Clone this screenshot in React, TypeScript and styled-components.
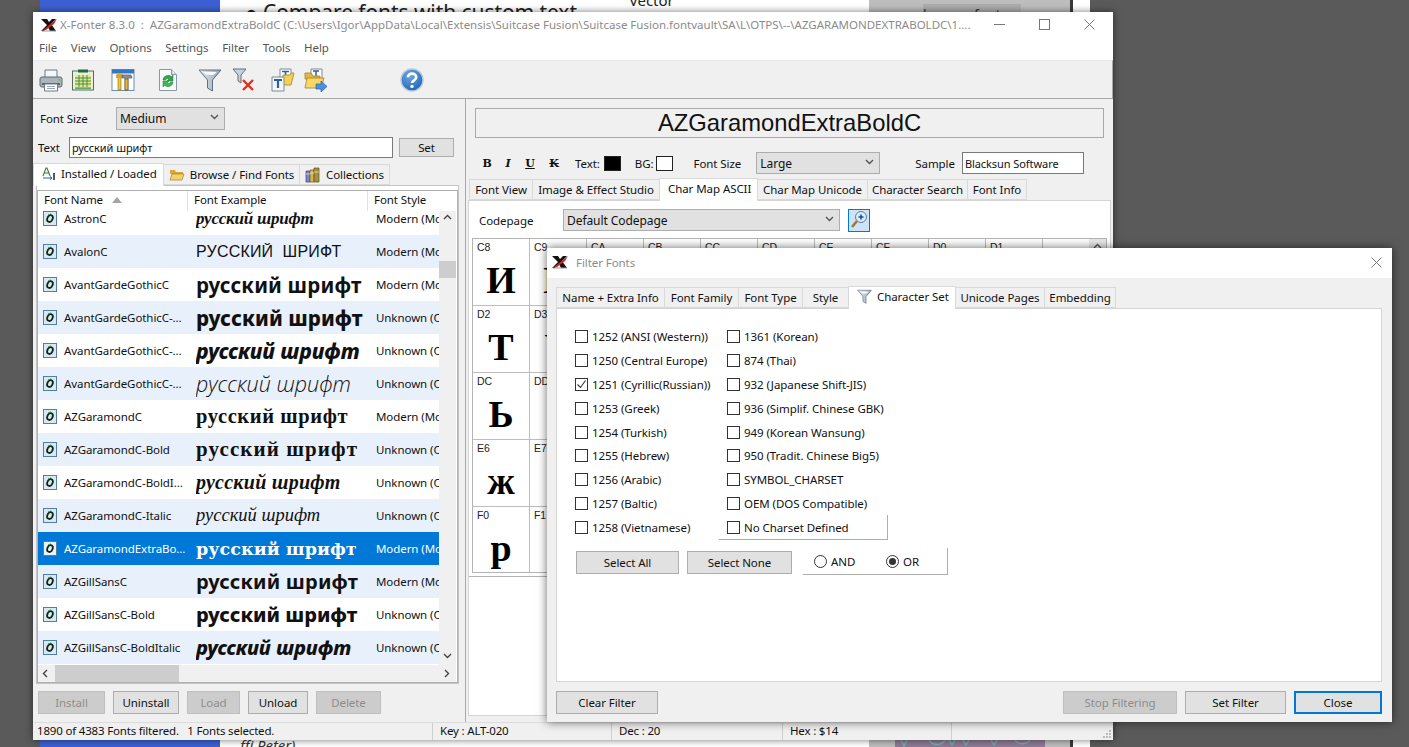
import React from "react";
import styled, { createGlobalStyle } from "styled-components";

const UI = `"Noto Sans", "Open Sans", sans-serif`;

const Global = createGlobalStyle`
  html, body { margin: 0; padding: 0; background: #5a5a5a; overflow: hidden; }
  * { box-sizing: border-box; }
`;

const Desktop = styled.div`
  position: relative; width: 1409px; height: 747px; overflow: hidden; background: #5a5a5a;
  font-family: ${UI}; font-size: 11.5px; letter-spacing: -0.07px; color: #111;
`;

/* ---------- page behind the windows ---------- */
const BackPage = styled.div`
  position: absolute; left: 40px; top: 0; width: 1050px; height: 747px; display: flex; background: #fff;
`;
const BackBlue = styled.div`width: 180px; background: #3c60d2;`;
const BackContent = styled.div`
  width: 649px; display: flex; flex-direction: column; justify-content: space-between; overflow: hidden;
`;
const BackTop = styled.div`display: flex; align-items: flex-start;`;
const BackBullet = styled.div`
  margin: 0 0 0 25px; font-size: 21px; line-height: 24px; white-space: nowrap; color: #222;
`;
const BackVector = styled.div`
  margin: -10px 0 0 52px; font-size: 15px; line-height: 20px; color: #222;
`;
const BackSign = styled.div`
  margin: 0 0 -4px 20px; height: 12px; font-size: 15px; line-height: 12px; font-style: italic; color: #333;
`;
const BackGray = styled.div`
  width: 201px; background: #bdbdbd; display: flex; flex-direction: column; justify-content: space-between;
`;
const BackBrowse = styled.div`
  margin: 4px 49px 0 54px; height: 8px; background: #adadad; font-size: 14px; line-height: 22px; overflow: hidden; color: #333;
`;
const BackArt = styled.div`
  margin: 0 25px 0 26px; height: 7px; background: #8d7a96; overflow: hidden;
`;
const BackEdge = styled.div`width: 3px; background: #3a3a3a;`;

/* ---------- window shell ---------- */
const MainWindow = styled.div`
  position: absolute; left: 33px; top: 12px; width: 1080px; height: 728px; background: #f0f0f0;
  display: flex; flex-direction: column; box-shadow: 0 0 7px rgba(0,0,0,.55);
`;
const TitleBar = styled.div`
  height: 25px; background: #fff; display: flex; align-items: center; padding-left: 7px; color: #8b8b8b; flex: none;
`;
const TitleText = styled.div`margin-left: 2px; white-space: pre; width: 915px; overflow: hidden; letter-spacing: 0;`;
const WinControls = styled.div`display: flex; align-items: center; margin-left: 19px; gap: 34px;`;
const MenuBar = styled.div`
  height: 23px; background: #fff; display: flex; align-items: center; padding: 0 0 3px 6px; gap: 13.7px; color: #555; flex: none;
`;
const Toolbar = styled.div`
  height: 39px; background: #f0f0f0; border-top: 1px solid #e8e8e8; border-bottom: 1px solid #a8a8a8; border-right: 1px solid #a8a8a8; display: flex; align-items: center; padding-left: 6px; flex: none;
`;
const ToolSlot = styled.div<{ $ml: number }>`width: 24px; height: 24px; margin-left: ${p => p.$ml}px; flex: none;`;
const Body = styled.div`flex: 1; display: flex; min-height: 0;`;
const StatusBar = styled.div`
  height: 18px; flex: none; display: flex; background: #f0f0f0; border-top: 1px solid #dcdcdc; position: relative;
`;
const StatusCell = styled.div<{ $w: number; $line?: boolean }>`
  width: ${p => p.$w}px; flex: none; padding-left: ${p => (p.$line ? 7 : 4)}px; line-height: 16px; white-space: pre; letter-spacing: -0.18px; border-left: ${p => (p.$line ? "1px solid #cfcfcf" : "none")};
`;
const Grip = styled.div`position: absolute; right: 1px; bottom: 1px; width: 10px; height: 10px;`;

/* ---------- left pane ---------- */
const LeftPane = styled.div`
  width: 433px; flex: none; display: flex; flex-direction: column; border-right: 1px solid #a9a9a9;
`;
const SizeRow = styled.div`display: flex; align-items: center; margin: 8px 0 0 7px; height: 23px;`;
const RowLabel = styled.div<{ $w: number }>`width: ${p => p.$w}px; flex: none; white-space: nowrap;`;
const SelectBox = styled.div<{ $w: number; $h?: number; $ml?: number }>`
  width: ${p => p.$w}px; height: ${p => p.$h ?? 23}px; margin-left: ${p => p.$ml ?? 0}px; flex: none; background: #e1e1e1; border: 1px solid #adadad; display: flex; align-items: center; justify-content: space-between; padding: 0 5px 0 3px; font-size: 12px;
`;
const TextRow = styled.div`display: flex; align-items: center; margin: 7px 0 0 5px; height: 21px;`;
const TextField = styled.div<{ $w: number; $h: number; $ml?: number }>`
  width: ${p => p.$w}px; height: ${p => p.$h}px; margin-left: ${p => p.$ml ?? 0}px; flex: none; background: #fff; border: 1px solid #7a7a7a; padding-left: 2px; display: flex; align-items: center; font-size: 11px; white-space: nowrap; overflow: hidden;
`;
const Btn = styled.div<{ $w: number; $h?: number; $off?: boolean; $focus?: boolean; $ml?: number }>`
  width: ${p => p.$w}px; height: ${p => p.$h ?? 23}px; margin-left: ${p => p.$ml ?? 0}px; flex: none; display: flex; align-items: center; justify-content: center; white-space: nowrap;
  background: ${p => (p.$off ? "#cccccc" : "#e1e1e1")};
  color: ${p => (p.$off ? "#8c8c8c" : "#111")};
  border: ${p => (p.$focus ? "2px solid #0078d7" : p.$off ? "1px solid #bfbfbf" : "1px solid #adadad")};
`;
const TabRow = styled.div<{ $ml: number; $mt: number }>`
  display: flex; align-items: flex-end; margin: ${p => p.$mt}px 0 0 ${p => p.$ml}px; height: 22px; flex: none; position: relative; z-index: 1;
`;
const Tab = styled.div<{ $w: number; $active?: boolean }>`
  width: ${p => p.$w}px; flex: none; display: flex; align-items: center; justify-content: ${p => (p.$active ? "flex-start" : "center")}; gap: 5px; white-space: nowrap;
  height: ${p => (p.$active ? 23 : 21)}px;
  background: ${p => (p.$active ? "#fff" : "#f0f0f0")};
  border: 1px solid #d9d9d9; border-bottom: ${p => (p.$active ? "none" : "1px solid #d9d9d9")};
  margin-bottom: ${p => (p.$active ? -1 : 0)}px; margin-right: -1px;
  padding-left: ${p => (p.$active ? 8 : 0)}px;
  padding-bottom: ${p => (p.$active ? 3 : 0)}px;
`;
const TabsPanel = styled.div`
  margin-left: 3px; width: 423px; height: 499px; border: 1px solid #c4c4c4; background: #fff; padding-top: 4px; flex: none;
`;
const FontList = styled.div`
  width: 421px; height: 493px; border: 1px solid #b0b0b0; background: #fff; display: flex; flex-direction: column; overflow: hidden;
`;
const ListHeader = styled.div`height: 20px; flex: none; display: flex; align-items: center; background: #fff;`;
const HeaderCell = styled.div<{ $w: number; $line?: boolean }>`
  width: ${p => p.$w}px; flex: none; height: 20px; display: flex; align-items: center; gap: 9px; padding: 0 0 3px 6px; border-right: ${p => (p.$line ? "1px solid #e2e2e2" : "none")};
`;
const ListMiddle = styled.div`flex: 1; display: flex; min-height: 0;`;
const Rows = styled.div`width: 401px; flex: none; overflow: hidden;`;
const RowsInner = styled.div`margin-top: -9px;`;
const FontRow = styled.div<{ $alt: boolean; $sel: boolean }>`
  height: 33px; display: flex; align-items: center; overflow: hidden;
  background: ${p => (p.$sel ? "#0078d7" : p.$alt ? "#e8f0fb" : "#fff")};
  color: ${p => (p.$sel ? "#fff" : "#111")};
`;
const NameCell = styled.div`width: 158px; flex: none; display: flex; align-items: center; padding-left: 5px; gap: 7px; white-space: nowrap; overflow: hidden;`;
const SampleCell = styled.div<{ $ff: string; $fw: number; $it?: boolean; $fs: number; $ls: number; $up?: boolean }>`
  width: 180px; flex: none; white-space: pre; overflow: hidden;
  font-family: ${p => p.$ff}; font-weight: ${p => p.$fw}; font-style: ${p => (p.$it ? "italic" : "normal")};
  font-size: ${p => p.$fs}px; letter-spacing: ${p => p.$ls}px; text-transform: ${p => (p.$up ? "uppercase" : "none")};
`;
const StyleCell = styled.div`width: 63px; flex: none; white-space: nowrap; overflow: hidden;`;
const VScroll = styled.div`
  width: 17px; flex: none; background: #f0f0f0; display: flex; flex-direction: column; justify-content: space-between; align-items: center; position: relative; padding: 3px 0;
`;
const VThumb = styled.div`position: absolute; left: 0; top: 50px; width: 17px; height: 17px; background: #cdcdcd;`;
const HScroll = styled.div`
  height: 17px; flex: none; width: 418px; background: #f0f0f0; display: flex; align-items: center; justify-content: space-between; position: relative; padding: 0 4px;
`;
const HThumb = styled.div`position: absolute; left: 17px; top: 0; width: 124px; height: 17px; background: #cdcdcd;`;
const ActionRow = styled.div`display: flex; gap: 8px; margin: 7px 0 0 5px;`;

/* ---------- right pane ---------- */
const RightPane = styled.div`flex: 1; display: flex; flex-direction: column; padding-left: 1px; min-width: 0;`;
const NameBanner = styled.div`
  margin: 9px 0 0 8px; width: 629px; height: 30px; flex: none; border: 1px solid #a9a9a9; display: flex; align-items: center; justify-content: center;
  font-family: "Liberation Sans", Arial, sans-serif; font-size: 23.8px; letter-spacing: 0; color: #111;
`;
const FormatRow = styled.div`display: flex; align-items: center; height: 22px; margin-top: 14px; flex: none; padding-left: 14px;`;
const FormatGlyph = styled.div<{ $ml: number; $it?: boolean; $u?: boolean; $s?: boolean }>`
  font-family: "DejaVu Serif", serif; font-weight: 700; font-size: 11px; width: 12px; text-align: center; margin-left: ${p => p.$ml}px; color: #111;
  font-style: ${p => (p.$it ? "italic" : "normal")};
  text-decoration: ${p => (p.$u ? "underline" : p.$s ? "line-through" : "none")};
`;
const FormatLabel = styled.div<{ $ml: number }>`margin-left: ${p => p.$ml}px; white-space: nowrap;`;
const Swatch = styled.div<{ $c: string; $ml: number }>`
  width: 17px; height: 15px; margin-left: ${p => p.$ml}px; background: ${p => p.$c}; border: 1px solid #222; flex: none;
`;
const RightPanel = styled.div`
  margin-left: 1px; width: 643px; height: 516px; flex: none; background: #fff; border: 1px solid #d4d4d4; display: flex; flex-direction: column;
`;
const CodeRow = styled.div`display: flex; align-items: center; margin: 7px 0 0 10px; height: 24px; flex: none;`;
const ZoomBtn = styled.div`
  width: 22px; height: 23px; margin-left: 8px; background: #cce4f7; border: 1px solid #0078d7; flex: none; display: flex; align-items: center; justify-content: center;
`;
const CharGridWrap = styled.div`
  margin: 6px 0 0 3px; width: 635px; height: 335px; flex: none; border: 1px solid #b4b4b4; display: flex;
`;
const CharGrid = styled.div`
  flex: 1; display: grid; grid-template-columns: repeat(10, 57px) 47px; grid-auto-rows: 67px; overflow: hidden; font-family: "Liberation Sans", sans-serif;
`;
const CharCell = styled.div`
  border-right: 1px solid #bdbdbd; border-bottom: 1px solid #bdbdbd; display: flex; flex-direction: column; align-items: center; position: relative; padding-top: 19px;
`;
const CharCode = styled.div`position: absolute; left: 4px; top: 2px; font-size: 10.5px; color: #222;`;
const CharGlyph = styled.div`font-family: "Liberation Serif", serif; font-weight: 700; font-size: 38px; line-height: 44px; color: #000;`;
const GridScroll = styled.div`
  width: 17px; flex: none; background: #e8e8e8; display: flex; justify-content: center; padding-top: 4px;
`;
const GridFootLine = styled.div`margin: 3px 0 0 0; height: 1px; background: #b4b4b4; flex: none;`;

/* ---------- dialog ---------- */
const Dialog = styled.div`
  position: absolute; left: 547px; top: 248px; width: 845px; height: 474px; background: #f0f0f0; display: flex; flex-direction: column; box-shadow: 0 0 9px rgba(0,0,0,.6); z-index: 5;
`;
const DialogTitle = styled.div`
  height: 30px; flex: none; background: #fff; display: flex; align-items: center; padding: 0 10px 2px 4px; gap: 7px; color: #8b8b8b;
`;
const DialogName = styled.div`flex: 1;`;
const DialogPanel = styled.div`
  margin-left: 9px; width: 826px; height: 374px; flex: none; background: #fff; border: 1px solid #d4d4d4; padding: 16px 0 0 18px;
`;
const CheckColumns = styled.div`display: flex;`;
const CheckCol = styled.div<{ $w: number }>`width: ${p => p.$w}px; flex: none; display: flex; flex-direction: column;`;
const CheckRow = styled.div<{ $group?: boolean }>`
  height: ${p => (p.$group ? 25 : 23.8)}px; display: flex; align-items: center; gap: 4px; padding-left: 8px; white-space: nowrap;
  border-right: ${p => (p.$group ? "1px solid #adadad" : "none")};
  border-bottom: ${p => (p.$group ? "1px solid #adadad" : "none")};
`;
const PlainCheckRow = styled(CheckRow)`padding-left: 0;`;
const Box = styled.div`
  width: 13px; height: 13px; flex: none; border: 1px solid #333; background: #fff; display: flex; align-items: center; justify-content: center;
`;
const BulkRow = styled.div`display: flex; align-items: flex-end; margin: 8px 0 0 1px; height: 27px;`;
const RadioGroup = styled.div`
  margin: 0 0 0 11px; width: 145px; height: 27px; border-right: 1px solid #adadad; border-bottom: 1px solid #adadad; display: flex; align-items: center; padding-left: 11px;
`;
const RadioItem = styled.div<{ $w: number }>`width: ${p => p.$w}px; display: flex; align-items: center; gap: 4px;`;
const Radio = styled.div<{ $on?: boolean }>`
  width: 13px; height: 13px; border: 1px solid #333; border-radius: 50%; background: #fff; flex: none; display: flex; align-items: center; justify-content: center;
  &::after { content: ""; width: 7px; height: 7px; border-radius: 50%; background: ${p => (p.$on ? "#333" : "transparent")}; }
`;
const BulkBtnGap = styled.div`display: flex; gap: 8px; margin-bottom: 1px;`;
const DialogFooter = styled.div`
  display: flex; align-items: center; gap: 8px; padding: 9px 10px 0 9px;
`;
const FooterSpacer = styled.div`flex: 1;`;

/* ---------- icons ---------- */
const Glyph = styled.svg`display: block; flex: none;`;

const Logo = () => (
  <Glyph width="18" height="14" viewBox="0 0 18 14">
    <path d="M1 1h6l2 3 3-3h4l-5 5 5 7h-6l-2-4-4 4H1l6-6z" fill="#111" />
    <path d="M3 12L17 1l-3 5-8 6z" fill="#d42020" />
    <path d="M2 13h14" stroke="#999" strokeWidth="1" />
  </Glyph>
);
const Chevron = ({ dir = "down", c = "#555" }: { dir?: "down" | "up" | "left" | "right"; c?: string }) => {
  const d = { down: "M1 1l3.5 3.5L8 1", up: "M1 5l3.5-3.5L8 5", left: "M5 1L1.5 4.5 5 8", right: "M2 1l3.5 3.5L2 8" }[dir];
  return (
    <Glyph width="9" height="9" viewBox="0 0 9 9">
      <path d={d} fill="none" stroke={c} strokeWidth="1.4" />
    </Glyph>
  );
};
const IconMin = () => <Glyph width="11" height="11" viewBox="0 0 11 11"><path d="M0 5.5h11" stroke="#777" /></Glyph>;
const IconMax = () => <Glyph width="11" height="11" viewBox="0 0 11 11"><rect x=".5" y=".5" width="10" height="10" fill="none" stroke="#777" /></Glyph>;
const IconClose = () => <Glyph width="11" height="11" viewBox="0 0 11 11"><path d="M.5.5l10 10M10.5.5l-10 10" stroke="#777" /></Glyph>;

const Printer = () => (
  <Glyph width="24" height="24" viewBox="0 0 24 24">
    <path d="M6 2h12v8H6z" fill="#f4f6f8" stroke="#6d7a86" />
    <rect x="1" y="9" width="22" height="10" rx="2" fill="#a9b4bd" stroke="#5c6873" />
    <rect x="3" y="15" width="18" height="2" fill="#59636d" />
    <circle cx="20" cy="12" r="1" fill="#62c04a" />
    <path d="M5.5 16h13v7h-13z" fill="#fff" stroke="#6d7a86" />
    <path d="M8 18.5h8M8 20.5h8" stroke="#9aa6b1" />
  </Glyph>
);
const Sheet = () => (
  <Glyph width="24" height="24" viewBox="0 0 24 24">
    <rect x="1.5" y="3" width="21" height="19" fill="#e9efd8" stroke="#55705a" />
    <rect x="7" y="1.5" width="10" height="3" fill="#1f6b3a" />
    <rect x="4" y="7" width="16" height="12" fill="#f1e38a" />
    <path d="M4 10h16M4 13h16M4 16h16M8 7v12M12 7v12M16 7v12" stroke="#2e8b4a" strokeWidth=".9" />
    <rect x="4" y="19.5" width="16" height="1.2" fill="#2e8b4a" />
  </Glyph>
);
const Hammer = () => (
  <Glyph width="24" height="24" viewBox="0 0 24 24">
    <rect x="1" y="1.5" width="22" height="21" fill="#fff" stroke="#6f8eb4" />
    <rect x="1" y="1.5" width="22" height="4" fill="#2f78c8" />
    <path d="M7 9h3v13H7z" fill="#f0c93a" stroke="#97761b" strokeWidth=".7" />
    <path d="M5 7c2-2 5-2 7 0v3H5z" fill="#d9a625" />
    <path d="M11 7h9l1 3h-4v12h-3V10h-3z" fill="#8e8f96" stroke="#55565b" strokeWidth=".7" />
    <path d="M14 11h3v11h-3z" fill="#e6b530" stroke="#7a5d14" strokeWidth=".7" />
  </Glyph>
);
const RefreshDoc = () => (
  <Glyph width="24" height="24" viewBox="0 0 24 24">
    <path d="M3.5 1.5h12l5 5v16h-17z" fill="#fafbfc" stroke="#8b97a3" />
    <path d="M15.5 1.5v5h5" fill="#dde3e8" stroke="#8b97a3" />
    <path d="M7 12a5 5 0 0 1 8.5-3.2L17 7v6h-6l2-2a2.6 2.6 0 0 0-3.6 1z" fill="#2ea84a" stroke="#1b7a32" strokeWidth=".5" />
    <path d="M17 14a5 5 0 0 1-8.5 3.2L7 19v-6h6l-2 2a2.6 2.6 0 0 0 3.6-1z" fill="#3fb95a" stroke="#1b7a32" strokeWidth=".5" />
  </Glyph>
);
const Funnel = ({ size = 24 }: { size?: number }) => (
  <Glyph width={size} height={size} viewBox="0 0 24 24">
    <defs>
      <linearGradient id="fg" x1="0" x2="1" y1="0" y2="0">
        <stop offset="0" stopColor="#e9eef2" /><stop offset="1" stopColor="#8fa1b0" />
      </linearGradient>
    </defs>
    <path d="M1 2h22l-8.5 10v11l-5-3v-8z" fill="url(#fg)" stroke="#5f7180" strokeWidth="1" />
    <path d="M5 4h14l-4 3H9z" fill="#f9fbfc" />
  </Glyph>
);
const FunnelX = () => (
  <Glyph width="24" height="24" viewBox="0 0 24 24">
    <path d="M1 1h13l-5 6v8l-3-2V7z" fill="#c8d2da" stroke="#5f7180" />
    <path d="M11 12l10 10M21 12L11 22" stroke="#e0301e" strokeWidth="2.4" />
  </Glyph>
);
const FolderT = () => (
  <Glyph width="24" height="24" viewBox="0 0 24 24">
    <path d="M9 1h11v12H9z" fill="#fff" stroke="#7c8b99" />
    <path d="M11 3.5h7M14.5 3.5v6" stroke="#2d5fa8" strokeWidth="1.6" />
    <path d="M12 7h7l1-2h3l-3 12H11z" fill="#f6cf55" stroke="#a3802a" strokeWidth=".8" />
    <path d="M1 9h12v14H1z" fill="#f4f7fa" stroke="#7c8b99" />
    <path d="M3 12h8M7 12v8" stroke="#2d5fa8" strokeWidth="2.2" />
  </Glyph>
);
const FolderArrow = () => (
  <Glyph width="24" height="24" viewBox="0 0 24 24">
    <path d="M7 1h11v10H7z" fill="#fff" stroke="#7c8b99" />
    <path d="M9 3h6M12 3v6" stroke="#2d5fa8" strokeWidth="1.5" />
    <path d="M1 5h6l2 3h7v3H1z" fill="#e3b63f" stroke="#a3802a" strokeWidth=".8" />
    <path d="M1 20L3 10h17l-3 10z" fill="#f8d766" stroke="#a3802a" strokeWidth=".8" />
    <path d="M12 16h5v-3l6 5.5-6 5.5v-3h-5z" fill="#4c8fe0" stroke="#2a62a8" strokeWidth=".7" />
  </Glyph>
);
const Help = () => (
  <Glyph width="24" height="24" viewBox="0 0 24 24">
    <defs>
      <radialGradient id="hg" cx=".4" cy=".3" r=".8">
        <stop offset="0" stopColor="#6da9e8" /><stop offset="1" stopColor="#1c5cac" />
      </radialGradient>
    </defs>
    <circle cx="12" cy="12" r="11" fill="url(#hg)" stroke="#b7c8dc" strokeWidth="1.4" />
    <path d="M8 9.3c0-5 8.2-5 8.2 0 0 3.2-4.1 2.8-4.1 5.7" fill="none" stroke="#fff" strokeWidth="2.7" />
    <circle cx="12" cy="18.4" r="1.7" fill="#fff" />
  </Glyph>
);
const FontFile = ({ sel }: { sel: boolean }) => (
  <Glyph width="14" height="15" viewBox="0 0 14 15">
    <rect x=".5" y=".5" width="13" height="14" fill={sel ? "#eaf3fb" : "#dbe8f3"} stroke="#4f7fa8" />
    <ellipse cx="7" cy="7.5" rx="2.6" ry="3.6" transform="rotate(25 7 7.5)" fill="none" stroke="#0f2a14" strokeWidth="1.8" />
    <path d="M5 4l3-1.2" stroke="#3ba55d" strokeWidth="1" />
  </Glyph>
);
const SortUp = () => <Glyph width="10" height="6" viewBox="0 0 10 6"><path d="M5 0l5 6H0z" fill="#a5a5a5" /></Glyph>;
const IconInstalled = () => (
  <Glyph width="14" height="14" viewBox="0 0 14 14">
    <path d="M1 9L4 1h1l3 8M2.5 6h4" fill="none" stroke="#3a7a3a" strokeWidth="1.1" />
    <path d="M1 11h9l-2-1.5M10 11l-2 1.5" fill="none" stroke="#2a62a8" />
    <path d="M12 6v7" stroke="#223" strokeWidth="1.5" />
  </Glyph>
);
const IconFolder = () => (
  <Glyph width="16" height="13" viewBox="0 0 16 13">
    <path d="M1 2h5l1 2h7v2H1z" fill="#d9a93a" />
    <path d="M1 12l2-6h12l-2 6z" fill="#f6d36a" stroke="#a3802a" strokeWidth=".7" />
  </Glyph>
);
const IconBooks = () => (
  <Glyph width="16" height="16" viewBox="0 0 16 16">
    <path d="M1 4h4v11H1z" fill="#7d86c9" stroke="#3c4170" strokeWidth=".7" />
    <path d="M5 3h4v12H5z" fill="#d6b553" stroke="#6f5a1c" strokeWidth=".7" />
    <path d="M9 1h5v14H9z" fill="#a39040" stroke="#5d5218" strokeWidth=".7" />
    <path d="M1 7h4M5 6h4M9 5h5" stroke="#fff" strokeWidth=".6" />
  </Glyph>
);
const IconZoom = () => (
  <Glyph width="18" height="20" viewBox="0 0 18 20">
    <circle cx="11" cy="7" r="5.5" fill="#dbeaf7" stroke="#5d7fa3" />
    <path d="M8.5 7h5M11 4.5v5" stroke="#1c4f9c" strokeWidth="1.6" />
    <path d="M7 11l-5 6" stroke="#a8742a" strokeWidth="2.6" />
  </Glyph>
);
const CheckMark = () => (
  <Glyph width="11" height="11" viewBox="0 0 11 11"><path d="M1.5 5.5l3 3 5-7" fill="none" stroke="#333" strokeWidth="1.1" /></Glyph>
);
const GripDots = () => (
  <Glyph width="10" height="10" viewBox="0 0 10 10">
    <path d="M7 1h2v2H7zM4 4h2v2H4zM7 4h2v2H7zM1 7h2v2H1zM4 7h2v2H4zM7 7h2v2H7z" fill="#bbb" />
  </Glyph>
);
const ArtPattern = () => (
  <Glyph width="150" height="7" viewBox="0 0 150 7">
    <path d="M6 0l3 6 3-6M34 0c4 6 12 6 16 0M54 0l3 5 3-5M68 0l3 5 3-5M96 0l3 5 3-5M120 0c3 5 12 5 15 0" fill="none" stroke="#6fb4b0" strokeWidth="1.4" />
  </Glyph>
);

/* ---------- data ---------- */
const SANS = `"Noto Sans", "Open Sans", sans-serif`;
const OPEN = `"Open Sans", "Noto Sans", sans-serif`;
const SERIF = `"Liberation Serif", serif`;
const DJS = `"DejaVu Serif", serif`;

type F = { name: string; kind: string; ff: string; fw: number; fs: number; ls: number; it?: boolean; up?: boolean };
const fonts: F[] = [
  { name: "AstronC", kind: "Modern (Mo", ff: SERIF, fw: 700, fs: 17, ls: -0.2, it: true },
  { name: "AvalonC", kind: "Modern (Mo", ff: `"Liberation Sans", sans-serif`, fw: 400, fs: 16, ls: 0.2, up: true },
  { name: "AvantGardeGothicC", kind: "Modern (Mo", ff: SANS, fw: 700, fs: 20.5, ls: 0.15 },
  { name: "AvantGardeGothicC-...", kind: "Unknown (C", ff: SANS, fw: 800, fs: 20.5, ls: 0.1 },
  { name: "AvantGardeGothicC-...", kind: "Unknown (C", ff: SANS, fw: 800, fs: 21, ls: 0, it: true },
  { name: "AvantGardeGothicC-...", kind: "Unknown (C", ff: OPEN, fw: 300, fs: 21.5, ls: 0, it: true },
  { name: "AZGaramondC", kind: "Modern (Mo", ff: SERIF, fw: 700, fs: 20.5, ls: 0.6 },
  { name: "AZGaramondC-Bold", kind: "Unknown (C", ff: SERIF, fw: 700, fs: 21, ls: 1.1 },
  { name: "AZGaramondC-BoldI...", kind: "Unknown (C", ff: SERIF, fw: 700, fs: 20, ls: 0.25, it: true },
  { name: "AZGaramondC-Italic", kind: "Unknown (C", ff: SERIF, fw: 400, fs: 18.5, ls: 0, it: true },
  { name: "AZGaramondExtraBo...", kind: "Modern (Mo", ff: DJS, fw: 700, fs: 17.5, ls: 0.05 },
  { name: "AZGillSansC", kind: "Modern (Mo", ff: SANS, fw: 700, fs: 20, ls: 0.2 },
  { name: "AZGillSansC-Bold", kind: "Unknown (C", ff: SANS, fw: 800, fs: 20, ls: 0 },
  { name: "AZGillSansC-BoldItalic", kind: "Unknown (C", ff: SANS, fw: 800, fs: 20, ls: -0.05, it: true },
];
const SEL = 10;

const codes = Array.from({ length: 50 }, (_, i) => 0xc8 + i);
const hex = (n: number) => n.toString(16).toUpperCase();
const glyph = (n: number) => String.fromCharCode(0x410 + n - 0xc0);

const leftSets: [string, boolean?][] = [
  ["1252 (ANSI (Western))"], ["1250 (Central Europe)"], ["1251 (Cyrillic(Russian))", true], ["1253 (Greek)"], ["1254 (Turkish)"],
  ["1255 (Hebrew)"], ["1256 (Arabic)"], ["1257 (Baltic)"], ["1258 (Vietnamese)"],
];
const rightSets = [
  "1361 (Korean)", "874 (Thai)", "932 (Japanese Shift-JIS)", "936 (Simplif. Chinese GBK)", "949 (Korean Wansung)",
  "950 (Tradit. Chinese Big5)", "SYMBOL_CHARSET", "OEM (DOS Compatible)",
];
const tools: [number, React.ReactNode][] = [
  [0, <Printer />], [8, <Sheet />], [16, <Hammer />], [21, <RefreshDoc />], [18, <Funnel />], [10, <FunnelX />], [15, <FolderT />], [9, <FolderArrow />], [72, <Help />],
];

export default function App() {
  return (
    <Desktop>
      <Global />
      <BackPage>
        <BackBlue />
        <BackContent>
          <BackTop>
            <BackBullet>● Compare fonts with custom text</BackBullet>
            <BackVector>Vector</BackVector>
          </BackTop>
          <BackSign>ffi Peter)</BackSign>
        </BackContent>
        <BackGray>
          <BackBrowse>browse fonts</BackBrowse>
          <BackArt><ArtPattern /></BackArt>
        </BackGray>
        <BackEdge />
      </BackPage>

      <MainWindow>
        <TitleBar>
          <Logo />
          <TitleText>{"X-Fonter 8.3.0  :  AZGaramondExtraBoldC (C:\\Users\\Igor\\AppData\\Local\\Extensis\\Suitcase Fusion\\Suitcase Fusion.fontvault\\SA\\L\\OTPS\\--\\AZGARAMONDEXTRABOLDC\\1...."}</TitleText>
          <WinControls><IconMin /><IconMax /><IconClose /></WinControls>
        </TitleBar>
        <MenuBar>
          {["File", "View", "Options", "Settings", "Filter", "Tools", "Help"].map(m => <div key={m}>{m}</div>)}
        </MenuBar>
        <Toolbar>
          {tools.map(([ml, icon], i) => <ToolSlot key={i} $ml={ml}>{icon}</ToolSlot>)}
        </Toolbar>
        <Body>
          <LeftPane>
            <SizeRow>
              <RowLabel $w={76}>Font Size</RowLabel>
              <SelectBox $w={109}>Medium<Chevron /></SelectBox>
            </SizeRow>
            <TextRow>
              <RowLabel $w={31}>Text</RowLabel>
              <TextField $w={324} $h={21}>русский шрифт</TextField>
              <Btn $w={55} $h={19} $ml={6}>Set</Btn>
            </TextRow>
            <TabRow $ml={0} $mt={5}>
              <Tab $w={131} $active><IconInstalled />Installed / Loaded</Tab>
              <Tab $w={137}><IconFolder />Browse / Find Fonts</Tab>
              <Tab $w={91}><IconBooks />Collections</Tab>
            </TabRow>
            <TabsPanel>
              <FontList>
                <ListHeader>
                  <HeaderCell $w={150} $line>Font Name<SortUp /></HeaderCell>
                  <HeaderCell $w={180} $line>Font Example</HeaderCell>
                  <HeaderCell $w={70}>Font Style</HeaderCell>
                </ListHeader>
                <ListMiddle>
                  <Rows>
                    <RowsInner>
                      {fonts.map((f, i) => (
                        <FontRow key={i} $alt={i % 2 === 1} $sel={i === SEL}>
                          <NameCell><FontFile sel={i === SEL} />{f.name}</NameCell>
                          <SampleCell $ff={f.ff} $fw={f.fw} $fs={f.fs} $ls={f.ls} $it={f.it} $up={f.up}>
                            {i === 1 ? "русский  шрифт" : "русский шрифт"}
                          </SampleCell>
                          <StyleCell>{f.kind}</StyleCell>
                        </FontRow>
                      ))}
                    </RowsInner>
                  </Rows>
                  <VScroll>
                    <VThumb />
                    <Chevron dir="up" c="#444" />
                    <Chevron dir="down" c="#444" />
                  </VScroll>
                </ListMiddle>
                <HScroll>
                  <HThumb />
                  <Chevron dir="left" c="#444" />
                  <Chevron dir="right" c="#444" />
                </HScroll>
              </FontList>
            </TabsPanel>
            <ActionRow>
              <Btn $w={67} $off>Install</Btn>
              <Btn $w={66}>Uninstall</Btn>
              <Btn $w={53} $off>Load</Btn>
              <Btn $w={60}>Unload</Btn>
              <Btn $w={65} $off>Delete</Btn>
            </ActionRow>
          </LeftPane>
          <RightPane>
            <NameBanner>AZGaramondExtraBoldC</NameBanner>
            <FormatRow>
              <FormatGlyph $ml={0}>B</FormatGlyph>
              <FormatGlyph $ml={9} $it>I</FormatGlyph>
              <FormatGlyph $ml={10} $u>U</FormatGlyph>
              <FormatGlyph $ml={12} $s>K</FormatGlyph>
              <FormatLabel $ml={15}>Text:</FormatLabel>
              <Swatch $c="#000" $ml={4} />
              <FormatLabel $ml={14}>BG:</FormatLabel>
              <Swatch $c="#fff" $ml={2} />
              <FormatLabel $ml={21}>Font Size</FormatLabel>
              <SelectBox $w={124} $h={22} $ml={15}>Large<Chevron /></SelectBox>
              <FormatLabel $ml={35}>Sample</FormatLabel>
              <TextField $w={122} $h={22} $ml={7}>Blacksun Software</TextField>
            </FormatRow>
            <TabRow $ml={2} $mt={4}>
              <Tab $w={64}>Font View</Tab>
              <Tab $w={128}>Image &amp; Effect Studio</Tab>
              <Tab $w={99} $active>Char Map ASCII</Tab>
              <Tab $w={111}>Char Map Unicode</Tab>
              <Tab $w={101}>Character Search</Tab>
              <Tab $w={60}>Font Info</Tab>
            </TabRow>
            <RightPanel>
              <CodeRow>
                <RowLabel $w={84}>Codepage</RowLabel>
                <SelectBox $w={277} $h={22}>Default Codepage<Chevron /></SelectBox>
                <ZoomBtn><IconZoom /></ZoomBtn>
              </CodeRow>
              <CharGridWrap>
                <CharGrid>
                  {codes.map(c => (
                    <React.Fragment key={c}>
                      <CharCell>
                        <CharCode>{hex(c)}</CharCode>
                        <CharGlyph>{glyph(c)}</CharGlyph>
                      </CharCell>
                      {(c - 0xc8) % 10 === 9 ? <CharCell /> : null}
                    </React.Fragment>
                  ))}
                </CharGrid>
                <GridScroll><Chevron dir="up" c="#555" /></GridScroll>
              </CharGridWrap>
              <GridFootLine />
            </RightPanel>
          </RightPane>
        </Body>
        <StatusBar>
          <StatusCell $w={399}>{"1890 of 4383 Fonts filtered.   1 Fonts selected."}</StatusCell>
          <StatusCell $w={179} $line>Key : ALT-020</StatusCell>
          <StatusCell $w={171} $line>Dec : 20</StatusCell>
          <StatusCell $w={169} $line>Hex : $14</StatusCell>
          <StatusCell $w={100} $line />
          <Grip><GripDots /></Grip>
        </StatusBar>
      </MainWindow>

      <Dialog>
        <DialogTitle>
          <Logo />
          <DialogName>Filter Fonts</DialogName>
          <IconClose />
        </DialogTitle>
        <TabRow $ml={9} $mt={8}>
          <Tab $w={109}>Name + Extra Info</Tab>
          <Tab $w={75}>Font Family</Tab>
          <Tab $w={65}>Font Type</Tab>
          <Tab $w={47}>Style</Tab>
          <Tab $w={108} $active><Funnel size={15} />Character Set</Tab>
          <Tab $w={90}>Unicode Pages</Tab>
          <Tab $w={72}>Embedding</Tab>
        </TabRow>
        <DialogPanel>
          <CheckColumns>
            <CheckCol $w={144}>
              {leftSets.map(([label, on]) => (
                <PlainCheckRow key={label}>
                  <Box>{on ? <CheckMark /> : null}</Box>
                  {label}
                </PlainCheckRow>
              ))}
            </CheckCol>
            <CheckCol $w={169}>
              {rightSets.map(label => (
                <CheckRow key={label}><Box />{label}</CheckRow>
              ))}
              <CheckRow $group><Box />No Charset Defined</CheckRow>
            </CheckCol>
          </CheckColumns>
          <BulkRow>
            <BulkBtnGap>
              <Btn $w={103}>Select All</Btn>
              <Btn $w={105}>Select None</Btn>
            </BulkBtnGap>
            <RadioGroup>
              <RadioItem $w={72}><Radio />AND</RadioItem>
              <RadioItem $w={50}><Radio $on />OR</RadioItem>
            </RadioGroup>
          </BulkRow>
        </DialogPanel>
        <DialogFooter>
          <Btn $w={102}>Clear Filter</Btn>
          <FooterSpacer />
          <Btn $w={114} $off>Stop Filtering</Btn>
          <Btn $w={101}>Set Filter</Btn>
          <Btn $w={88} $focus>Close</Btn>
        </DialogFooter>
      </Dialog>
    </Desktop>
  );
}
